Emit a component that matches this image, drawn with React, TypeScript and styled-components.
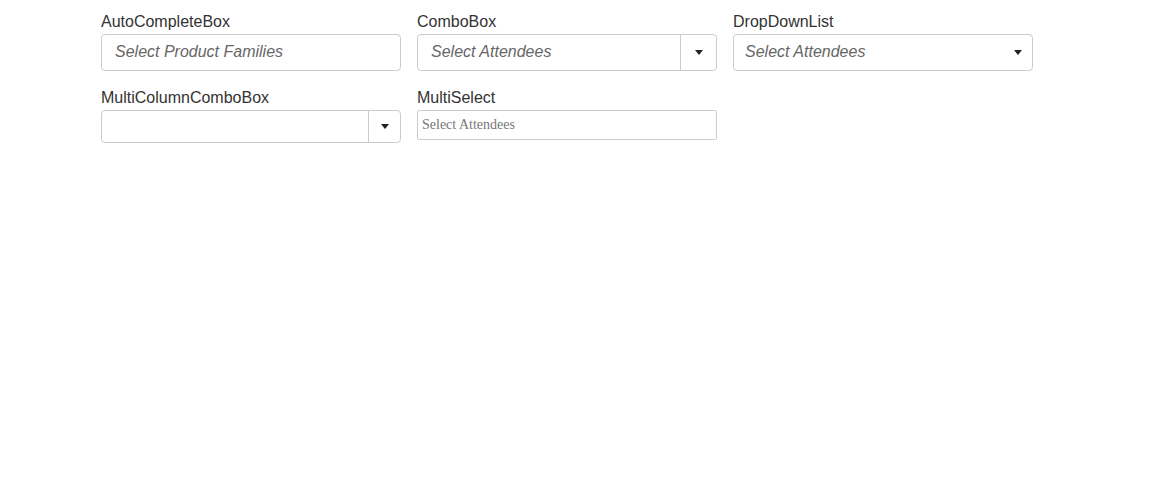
import styled, { createGlobalStyle } from "styled-components";

const GlobalStyle = createGlobalStyle`
  html, body {
    margin: 0;
    padding: 0;
    background: #fff;
  }
  body {
    font-family: "Liberation Sans", Arial, sans-serif;
    color: #333;
  }
`;

const Page = styled.div`
  padding: 12px 0 0 101px;
  display: grid;
  grid-template-columns: repeat(3, 300px);
  column-gap: 16px;
  row-gap: 17px;
  align-items: start;
`;

const Field = styled.div`
  display: flex;
  flex-direction: column;
`;

const Label = styled.label`
  font-size: 16px;
  line-height: 20px;
  color: #333;
  margin-bottom: 2px;
`;

const Box = styled.div<{ $height: number; $radius?: number }>`
  box-sizing: border-box;
  height: ${(p) => p.$height}px;
  border: 1px solid #ccc;
  border-radius: ${(p) => p.$radius ?? 4}px;
  display: flex;
  align-items: center;
  background: #fff;
  overflow: hidden;
`;

const Placeholder = styled.span<{ $indent?: number }>`
  flex: 1;
  padding-left: ${(p) => p.$indent ?? 13}px;
  padding-bottom: 1px;
  font-size: 16px;
  font-style: italic;
  color: #666;
  white-space: nowrap;
`;

const SerifPlaceholder = styled.span`
  flex: 1;
  padding-left: 4px;
  font-family: "Liberation Serif", "Times New Roman", serif;
  font-size: 14px;
  color: #777;
`;

const ArrowButton = styled.span<{ $width: number; $divider?: boolean }>`
  width: ${(p) => p.$width}px;
  align-self: stretch;
  display: flex;
  align-items: center;
  justify-content: center;
  border-left: ${(p) => (p.$divider ? "1px solid #ccc" : "none")};
`;

const Caret = () => (
  <svg width="8" height="5" viewBox="0 0 8 5">
    <path d="M0 0h8L4 5z" fill="#222" />
  </svg>
);

export default function App() {
  return (
    <>
      <GlobalStyle />
      <Page>
        <Field>
          <Label>AutoCompleteBox</Label>
          <Box $height={37}>
            <Placeholder>Select Product Families</Placeholder>
          </Box>
        </Field>
        <Field>
          <Label>ComboBox</Label>
          <Box $height={37}>
            <Placeholder>Select Attendees</Placeholder>
            <ArrowButton $width={35} $divider>
              <Caret />
            </ArrowButton>
          </Box>
        </Field>
        <Field>
          <Label>DropDownList</Label>
          <Box $height={37}>
            <Placeholder $indent={11}>Select Attendees</Placeholder>
            <ArrowButton $width={28}>
              <Caret />
            </ArrowButton>
          </Box>
        </Field>
        <Field>
          <Label>MultiColumnComboBox</Label>
          <Box $height={33}>
            <Placeholder />
            <ArrowButton $width={31} $divider>
              <Caret />
            </ArrowButton>
          </Box>
        </Field>
        <Field>
          <Label>MultiSelect</Label>
          <Box $height={30} $radius={2}>
            <SerifPlaceholder>Select Attendees</SerifPlaceholder>
          </Box>
        </Field>
      </Page>
    </>
  );
}
